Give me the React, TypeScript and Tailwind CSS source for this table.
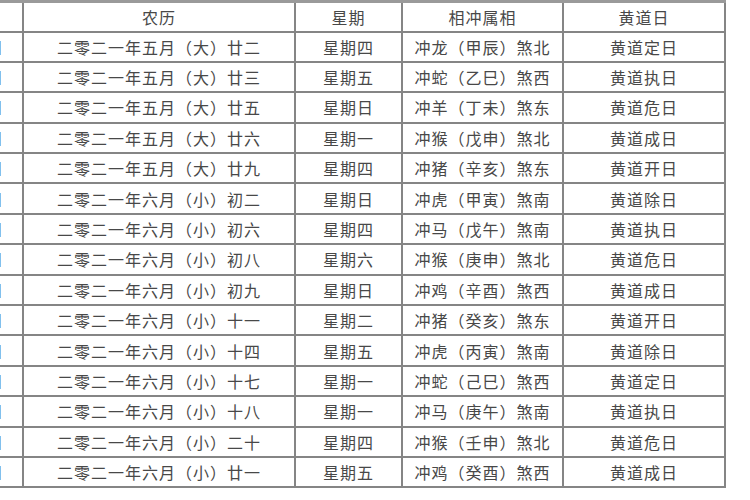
import React from 'react';

type Row = {
  solar: string;
  lunar: string;
  week: string;
  clash: string;
  day: string;
};

const rows: Row[] = [
  { solar: '2021年7月1日', lunar: '二零二一年五月（大）廿二', week: '星期四', clash: '冲龙（甲辰）煞北', day: '黄道定日' },
  { solar: '2021年7月2日', lunar: '二零二一年五月（大）廿三', week: '星期五', clash: '冲蛇（乙巳）煞西', day: '黄道执日' },
  { solar: '2021年7月4日', lunar: '二零二一年五月（大）廿五', week: '星期日', clash: '冲羊（丁未）煞东', day: '黄道危日' },
  { solar: '2021年7月5日', lunar: '二零二一年五月（大）廿六', week: '星期一', clash: '冲猴（戊申）煞北', day: '黄道成日' },
  { solar: '2021年7月8日', lunar: '二零二一年五月（大）廿九', week: '星期四', clash: '冲猪（辛亥）煞东', day: '黄道开日' },
  { solar: '2021年7月11日', lunar: '二零二一年六月（小）初二', week: '星期日', clash: '冲虎（甲寅）煞南', day: '黄道除日' },
  { solar: '2021年7月15日', lunar: '二零二一年六月（小）初六', week: '星期四', clash: '冲马（戊午）煞南', day: '黄道执日' },
  { solar: '2021年7月17日', lunar: '二零二一年六月（小）初八', week: '星期六', clash: '冲猴（庚申）煞北', day: '黄道危日' },
  { solar: '2021年7月18日', lunar: '二零二一年六月（小）初九', week: '星期日', clash: '冲鸡（辛酉）煞西', day: '黄道成日' },
  { solar: '2021年7月20日', lunar: '二零二一年六月（小）十一', week: '星期二', clash: '冲猪（癸亥）煞东', day: '黄道开日' },
  { solar: '2021年7月23日', lunar: '二零二一年六月（小）十四', week: '星期五', clash: '冲虎（丙寅）煞南', day: '黄道除日' },
  { solar: '2021年7月26日', lunar: '二零二一年六月（小）十七', week: '星期一', clash: '冲蛇（己巳）煞西', day: '黄道定日' },
  { solar: '2021年7月27日', lunar: '二零二一年六月（小）十八', week: '星期一', clash: '冲马（庚午）煞南', day: '黄道执日' },
  { solar: '2021年7月29日', lunar: '二零二一年六月（小）二十', week: '星期四', clash: '冲猴（壬申）煞北', day: '黄道危日' },
  { solar: '2021年7月30日', lunar: '二零二一年六月（小）廿一', week: '星期五', clash: '冲鸡（癸酉）煞西', day: '黄道成日' },
];

const cell = 'border-2 border-[#858585] text-center align-middle p-0';

const App: React.FC = () => {
  return (
    <div
      className="w-[750px] h-[500px] bg-white overflow-hidden text-[16px] tracking-[1px] text-[#484848] leading-none"
      style={{ fontFamily: "'Noto Sans CJK SC', 'Noto Sans', sans-serif" }}
    >
      <table className="table-fixed border-collapse w-[725px] border-t-[3px] border-t-[#9a9a9a]">
        <colgroup>
          <col className="w-[23px]" />
          <col className="w-[272px]" />
          <col className="w-[107px]" />
          <col className="w-[161px]" />
          <col className="w-[162px]" />
        </colgroup>
        <thead>
          <tr className="h-[30px]">
            <th className={`${cell} border-l-0 font-normal`}></th>
            <th className={`${cell} font-normal`}>农历</th>
            <th className={`${cell} font-normal`}>星期</th>
            <th className={`${cell} font-normal`}>相冲属相</th>
            <th className={`${cell} font-normal`}>黄道日</th>
          </tr>
        </thead>
        <tbody>
          {rows.map((r) => (
            <tr key={r.solar} className="h-[30.4px]">
              <td className={`${cell} border-l-0`}>
                {/* date column is cut off by the crop, only the tail of 日 shows */}
                <div
                  className={`flex justify-end overflow-hidden whitespace-nowrap ${
                    r.solar.length > 10 ? 'pr-[16px]' : 'pr-[18px]'
                  }`}
                >
                  {r.solar}
                </div>
              </td>
              <td className={cell}>{r.lunar}</td>
              <td className={cell}>{r.week}</td>
              <td className={cell}>{r.clash}</td>
              <td className={cell}>{r.day}</td>
            </tr>
          ))}
        </tbody>
      </table>
    </div>
  );
};

export default App;
